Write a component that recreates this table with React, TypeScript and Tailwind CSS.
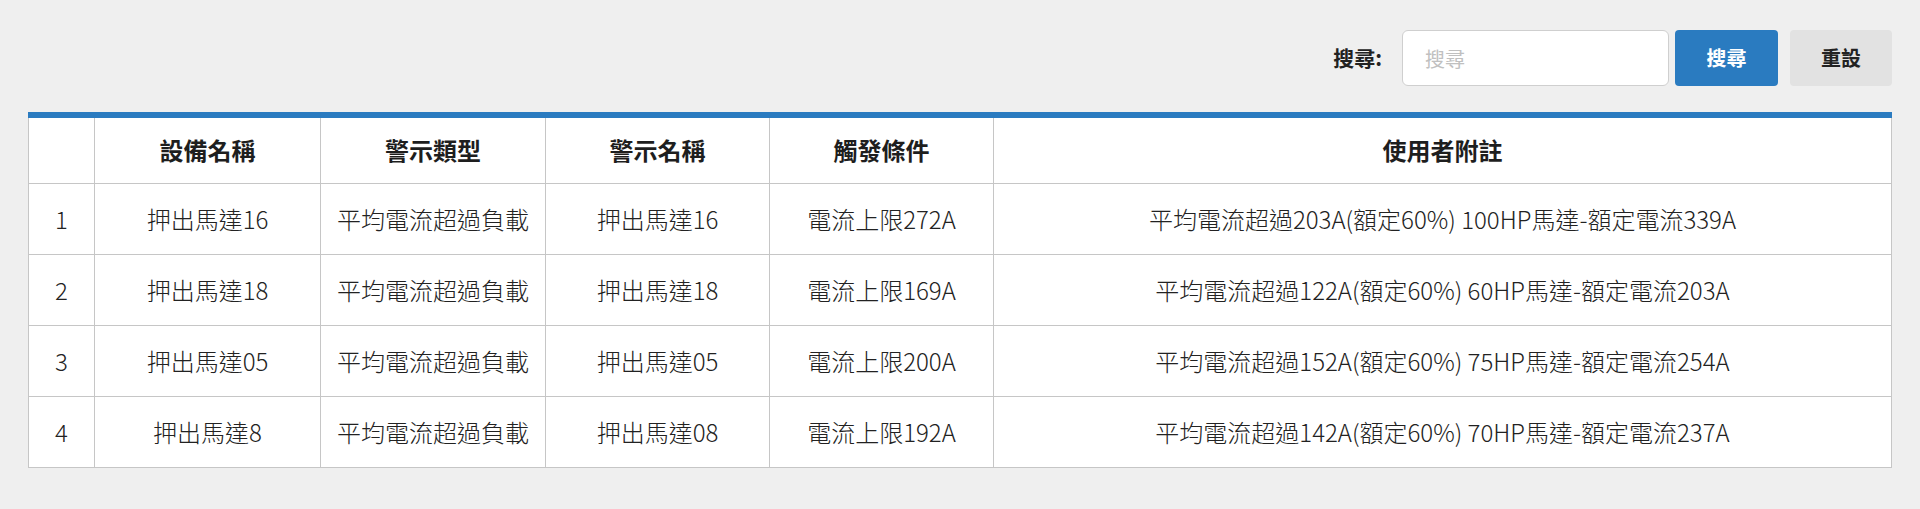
import React from 'react';

const rows = [
  {
    id: 1,
    device: '押出馬達16',
    type: '平均電流超過負載',
    name: '押出馬達16',
    cond: '電流上限272A',
    note: '平均電流超過203A(額定60%) 100HP馬達-額定電流339A',
  },
  {
    id: 2,
    device: '押出馬達18',
    type: '平均電流超過負載',
    name: '押出馬達18',
    cond: '電流上限169A',
    note: '平均電流超過122A(額定60%) 60HP馬達-額定電流203A',
  },
  {
    id: 3,
    device: '押出馬達05',
    type: '平均電流超過負載',
    name: '押出馬達05',
    cond: '電流上限200A',
    note: '平均電流超過152A(額定60%) 75HP馬達-額定電流254A',
  },
  {
    id: 4,
    device: '押出馬達8',
    type: '平均電流超過負載',
    name: '押出馬達08',
    cond: '電流上限192A',
    note: '平均電流超過142A(額定60%) 70HP馬達-額定電流237A',
  },
];

const App: React.FC = () => {
  return (
    <div className="min-h-[509px] bg-[#efefef] px-[28px] pt-[30px] pb-[43px] font-['Noto_Sans_CJK_TC','Noto_Sans',sans-serif]">
      {/* Search toolbar */}
      <div className="flex items-center justify-end">
        <label className="mr-[20px] text-[21px] font-bold text-[#222]">搜尋:</label>
        <input
          type="text"
          placeholder="搜尋"
          className="h-[56px] w-[267px] rounded-[6px] border border-[#cfcfcf] bg-white pl-[22px] text-[20px] text-[#333] outline-none placeholder:text-[#c0c0c0]"
        />
        <button className="ml-[6px] h-[56px] w-[103px] rounded-[4px] bg-[#2a7bc0] text-[20px] font-bold text-white">
          搜尋
        </button>
        <button className="ml-[12px] h-[56px] w-[102px] rounded-[4px] bg-[#e2e2e2] text-[20px] font-bold text-[#222]">
          重設
        </button>
      </div>

      {/* Alert table */}
      <table className="mt-[26px] w-full table-fixed border-collapse border-t-[6px] border-t-[#2a7bc0] bg-white text-[24px]">
        <colgroup>
          <col className="w-[66px]" />
          <col className="w-[226px]" />
          <col className="w-[225px]" />
          <col className="w-[224px]" />
          <col className="w-[224px]" />
          <col />
        </colgroup>
        <thead>
          <tr className="h-[68px]">
            <th className="border border-[#c6c6c6] border-t-0 font-bold text-[#1e1e1e]"></th>
            <th className="border border-[#c6c6c6] border-t-0 font-bold text-[#1e1e1e]">設備名稱</th>
            <th className="border border-[#c6c6c6] border-t-0 font-bold text-[#1e1e1e]">警示類型</th>
            <th className="border border-[#c6c6c6] border-t-0 font-bold text-[#1e1e1e]">警示名稱</th>
            <th className="border border-[#c6c6c6] border-t-0 font-bold text-[#1e1e1e]">觸發條件</th>
            <th className="border border-[#c6c6c6] border-t-0 font-bold text-[#1e1e1e]">使用者附註</th>
          </tr>
        </thead>
        <tbody>
          {rows.map((r) => (
            <tr key={r.id} className="h-[71px] text-center font-light text-[#222]">
              <td className="border border-[#c6c6c6]">{r.id}</td>
              <td className="border border-[#c6c6c6]">{r.device}</td>
              <td className="border border-[#c6c6c6]">{r.type}</td>
              <td className="border border-[#c6c6c6]">{r.name}</td>
              <td className="border border-[#c6c6c6]">{r.cond}</td>
              <td className="border border-[#c6c6c6]">{r.note}</td>
            </tr>
          ))}
        </tbody>
      </table>
    </div>
  );
};

export default App;
